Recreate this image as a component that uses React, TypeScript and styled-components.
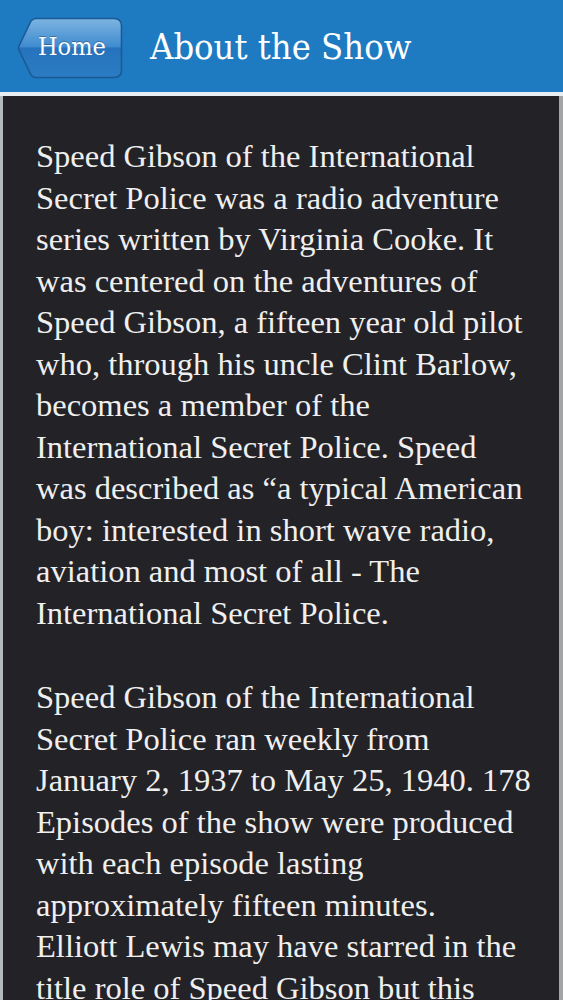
import React from "react";
import styled, {createGlobalStyle} from "styled-components";

// Text is broken into lines as they sit on the phone screen
const paragraphs: string[][] = [
    [
        "Speed Gibson of the International",
        "Secret Police was a radio adventure",
        "series written by Virginia Cooke. It",
        "was centered on the adventures of",
        "Speed Gibson, a fifteen year old pilot",
        "who, through his uncle Clint Barlow,",
        "becomes a member of the",
        "International Secret Police. Speed",
        "was described as \u201ca typical American",
        "boy: interested in short wave radio,",
        "aviation and most of all - The",
        "International Secret Police.",
    ],
    [
        "Speed Gibson of the International",
        "Secret Police ran weekly from",
        "January 2, 1937 to May 25, 1940. 178",
        "Episodes of the show were produced",
        "with each episode lasting",
        "approximately fifteen minutes.",
        "Elliott Lewis may have starred in the",
        "title role of Speed Gibson but this",
    ],
];

const BackShape = () => (
    <ShapeSvg viewBox="0 0 106 62" width="106" height="62">
        <defs>
            <linearGradient id="gloss" x1="0" y1="0" x2="0" y2="1">
                <stop offset="0" stopColor="#7db4e2"/>
                <stop offset="0.48" stopColor="#3f8bcf"/>
                <stop offset="0.5" stopColor="#2573bc"/>
                <stop offset="1" stopColor="#2b7cc3"/>
            </linearGradient>
        </defs>
        <path
            d="M19 1.5 H97 Q104.5 1.5 104.5 9 V53 Q104.5 60.5 97 60.5 H19 Q16 60.5 14 58 L2 33 Q1 31 2 29 L14 4 Q16 1.5 19 1.5 Z"
            fill="url(#gloss)"
            stroke="#1b5a95"
            strokeWidth="1.6"
        />
    </ShapeSvg>
);

const App = () => {
    return (
        <>
            <GlobalStyle/>
            <Page>
                <Header>
                    <HomeButton>
                        <BackShape/>
                        <HomeLabel>Home</HomeLabel>
                    </HomeButton>
                    <Title>About the Show</Title>
                </Header>
                <Panel>
                    {paragraphs.map((lines, i) => (
                        <Paragraph key={i}>
                            {lines.map((line, j) => (
                                <Line key={j}>{line}</Line>
                            ))}
                        </Paragraph>
                    ))}
                </Panel>
            </Page>
        </>
    );
};

const GlobalStyle = createGlobalStyle`
  html, body {
    margin: 0;
    padding: 0;
    background: #e8eef1;
  }
`;

const Page = styled.div`
  display: flex;
  flex-direction: column;
  height: 100vh;
  overflow: hidden;
  background: #e8eef1;
`;

const Header = styled.header`
  flex: none;
  height: 92px;
  display: flex;
  align-items: center;
  gap: 27px;
  padding: 3px 0 0 17px;
  box-sizing: border-box;
  background: #1e7bc2;
`;

const HomeButton = styled.button`
  position: relative;
  flex: none;
  width: 106px;
  height: 62px;
  padding: 0 0 2px 21px;
  border: none;
  background: none;
  display: flex;
  align-items: center;
  justify-content: flex-start;
  cursor: pointer;
`;

const ShapeSvg = styled.svg`
  position: absolute;
  left: 0;
  top: 0;
`;

const HomeLabel = styled.span`
  position: relative;
  font-family: "DejaVu Serif Condensed", "DejaVu Serif", serif;
  font-stretch: condensed;
  font-size: 25px;
  color: #ffffff;
  text-shadow: 0 -1px 0 rgba(0, 0, 0, 0.25);
`;

const Title = styled.h1`
  margin: 0 0 2px;
  font-family: "DejaVu Serif Condensed", "DejaVu Serif", serif;
  font-stretch: condensed;
  font-weight: normal;
  font-size: 36px;
  color: #ffffff;
  white-space: nowrap;
`;

const Panel = styled.main`
  flex: 1;
  margin-top: 4px;
  padding: 40px 0 0 33px;
  border-left: 3px solid #b4b9bd;
  border-right: 4px solid #a3a4a6;
  background: #232227;
  overflow: hidden;
`;

const Paragraph = styled.p`
  margin: 0 0 43px;
  font-family: "Liberation Serif", "Times New Roman", serif;
  font-size: 32.5px;
  line-height: 41.5px;
  color: #efefef;
`;

const Line = styled.span`
  display: block;
  white-space: nowrap;
`;

export default App;
